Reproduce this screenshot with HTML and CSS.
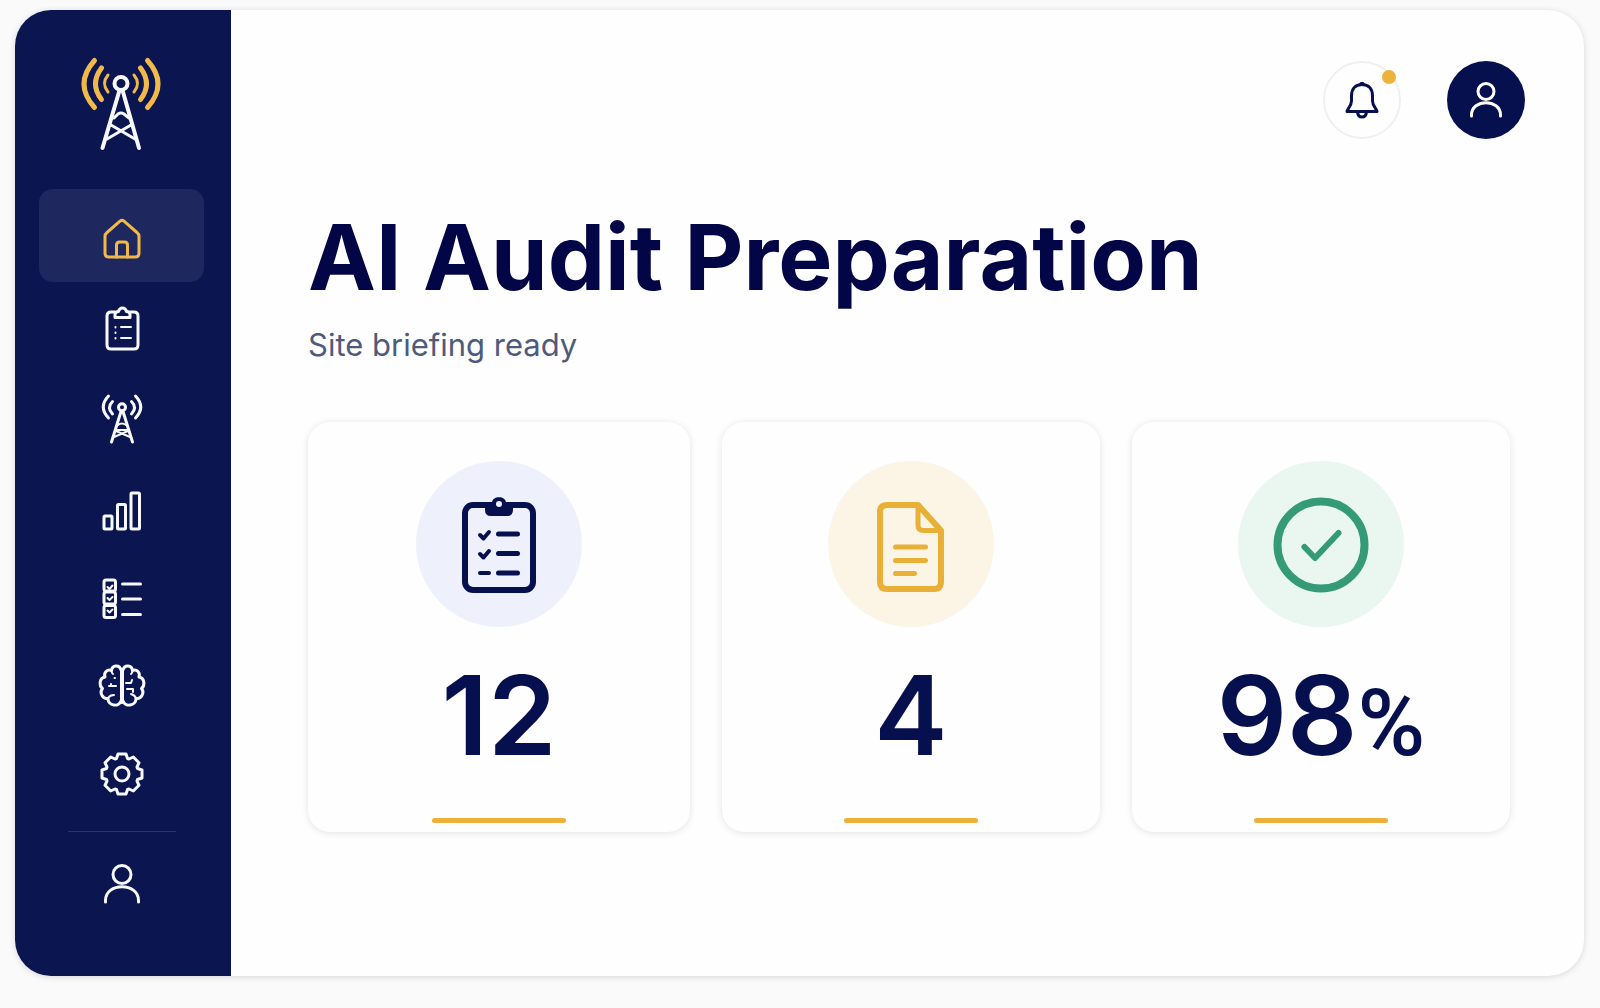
FILE: index.html
```html
<!DOCTYPE html>
<html lang="en">
<head>
    <meta charset="UTF-8">
    <meta name="viewport" content="width=device-width, initial-scale=1.0">
    <title>AI Audit Preparation</title>
    <link rel="stylesheet" href="styles.css">
</head>
<body>
    <div class="app">
        <aside class="sidebar">
            <a href="#" class="logo" aria-label="Home page">
                <svg width="84" height="96" viewBox="0 0 84 96">
                    <g class="waves">
                        <path stroke-width="5" d="M14.500 4.500Q-6.500 28 14.500 51.500M67.500 4.500Q88.500 28 67.500 51.500"/>
                        <path stroke-width="5" d="M21.500 12Q9.500 28 21.500 43.500M60.500 12Q72.500 28 60.500 43.500"/>
                        <path stroke-width="3" d="M28 19Q21 27.500 28 36M54 19Q61 27.500 54 36"/>
                    </g>
                    <circle cx="41" cy="27.500" r="6.500" stroke-width="4"/>
                    <path stroke-width="4" d="M39 36L22.500 92M43 36L59 92"/>
                    <path stroke-width="3" d="M34 62L38 58Q41 56 44 58L49 62M31 69L55 83M51 69L27 83"/>
                </svg>
            </a>

            <nav class="nav">
                <a href="#" class="nav-item active" aria-label="Home">
                    <svg width="44" height="44" viewBox="0 -3 44 44">
                        <path d="M5 19.500Q5 17 7 15.500L20 4.200Q22 2.500 24 4.200L37 15.500Q39 17 39 19.500V36Q39 40 35 40H9Q5 40 5 36Z"/>
                        <path d="M16.500 40V28Q16.500 25 19.500 25H24.500Q27.500 25 27.500 28V40"/>
                    </svg>
                </a>
                <a href="#" class="nav-item" aria-label="Checklist">
                    <svg width="44" height="44" viewBox="0 1 44 44">
                        <path d="M15 5H11Q7 5 7 9V38Q7 42 11 42H34Q38 42 38 38V9Q38 5 34 5H30"/>
                        <path d="M15 10.500V7.500Q15 4.500 18.500 4.500Q19.500 1 22.500 1Q25.500 1 26.500 4.500Q30 4.500 30 7.500V10.500Z"/>
                        <path stroke-width="2" d="M15.500 20V20.500M15.500 25.500V26M15.500 31V31.500M21 20H31M21 31H31"/>
                    </svg>
                </a>
                <a href="#" class="nav-item" aria-label="Towers">
                    <svg width="44" height="50" viewBox="0 0 44 50">
                        <path d="M8.500 2Q-2 13 8.500 24M12.500 7.500Q6.500 13.500 12.500 20M35.500 2Q46 13 35.500 24M31.500 7.500Q37.500 13.500 31.500 20"/>
                        <circle cx="22" cy="13.300" r="3.500"/>
                        <path d="M21 17.500L11.500 48M23 17.500L32.500 48"/>
                        <path stroke-width="2" d="M18 31Q22 28 26 31M17 36H27M16 37L30 43M28 37L14 43"/>
                    </svg>
                </a>
                <a href="#" class="nav-item" aria-label="Statistics">
                    <svg width="44" height="44" viewBox="0 -3 44 44">
                        <rect x="4" y="27" width="8" height="13" rx="1"/>
                        <rect x="17.500" y="15.500" width="8" height="24.500" rx="1"/>
                        <rect x="31" y="4" width="8.500" height="36" rx="1"/>
                    </svg>
                </a>
                <a href="#" class="nav-item" aria-label="Tasks">
                    <svg width="44" height="44" viewBox="0 -2 44 44">
                        <rect x="4" y="3" width="11.500" height="11" rx="2"/>
                        <rect x="4" y="15" width="11.500" height="12" rx="2"/>
                        <rect x="4" y="28.500" width="11.500" height="12" rx="2"/>
                        <path d="M22.500 7H40.500M22.500 22H40.500M22.500 37.500H40.500"/>
                        <path stroke-width="2" d="M7.500 10L9.500 12L12.500 8.500M7.500 21L9.500 23L12.500 20M7.500 33.500L9.500 35.500L12.500 32.500"/>
                    </svg>
                </a>
                <a href="#" class="nav-item" aria-label="Insights">
                    <svg width="46" height="44" viewBox="0 0 46 44">
                        <path d="M22 6C20.500 0 13 1 12.500 6.500C8 5 4.500 8.500 6 13C0 14 0 22 3.500 24.500C0 29 4 35.500 9 34.500C9 42 20 43.500 22 37"/>
                        <path d="M24 6C25.500 0 33 1 33.500 6.500C38 5 41.500 8.500 40 13C46 14 46 22 42.500 24.500C46 29 42 35.500 37 34.500C37 42 26 43.500 24 37"/>
                        <path stroke-width="4" d="M23 6V38"/>
                        <path stroke-width="2" d="M10 22H17M12 20V22M15.500 14H16M9 34Q11 31 15 31M27 19H32L33 16M28 25H34V28M12.500 6.500Q12.500 9 14 10M33.500 6.500Q33.500 9 32 10M37 34.500Q36 31 32 30"/>
                    </svg>
                </a>
                <a href="#" class="nav-item" aria-label="Settings">
                    <svg width="44" height="44" viewBox="-22 -21 44 44">
                        <path d="M-4 -20H4L5.500 -15.500L7 -15L11.300 -17L17 -11.300L15 -7L15.500 -5.500L20 -4V4L15.500 5.500L15 7L17 11.300L11.300 17L7 15L5.500 15.500L4 20H-4L-5.500 15.500L-7 15L-11.300 17L-17 11.300L-15 7L-15.500 5.500L-20 4V-4L-15.500 -5.500L-15 -7L-17 -11.300L-11.300 -17L-7 -15L-5.500 -15.500Z"/>
                        <circle r="7"/>
                    </svg>
                </a>
            </nav>

            <hr class="divider">

            <a href="#" class="nav-item" aria-label="Account">
                <svg width="44" height="44" viewBox="0 1 44 44">
                    <circle cx="22" cy="12.500" r="9"/>
                    <path d="M5.500 40V38.500C5.500 20 38.500 20 38.500 38.500V40"/>
                </svg>
            </a>
        </aside>

        <main class="content">
            <header class="topbar">
                <button class="round-button bell" aria-label="Notifications">
                    <svg width="34" height="38" viewBox="0 0 34 38">
                        <path d="M17 3.500C10 3.500 6.500 8 6.500 15V20C6.500 25 2 28 2 30.500H32C32 28 27.500 25 27.500 20V15C27.500 8 24 3.500 17 3.500Z"/>
                        <path d="M16 2.500H18M12.500 31Q13 36 17 36Q21 36 21.500 31"/>
                    </svg>
                    <span class="badge"></span>
                </button>
                <button class="round-button avatar" aria-label="Profile">
                    <svg width="36" height="38" viewBox="0 0 36 38">
                        <circle cx="18" cy="10.500" r="8"/>
                        <path d="M3.500 35V34C3.500 17.500 32.500 17.500 32.500 34V35"/>
                    </svg>
                </button>
            </header>

            <h1>AI Audit Preparation</h1>
            <p class="subtitle">Site briefing ready</p>

            <section class="cards">
                <article class="card">
                    <div class="card-icon blue">
                        <svg width="74" height="100" viewBox="0 0 74 100">
                            <rect x="3" y="11" width="68" height="85" rx="8" stroke-width="6"/>
                            <path class="solid" d="M23 10H30C29 1 45 1 44 10H51V16Q51 22 45 22H29Q23 22 23 16Z"/>
                            <circle class="hole" cx="37" cy="10" r="3"/>
                            <path stroke-width="4" d="M18 41L21.500 44.500L27 38M18 60L21.500 63.500L27 57M18 79H27"/>
                            <path stroke-width="5" d="M36.500 40H55.500M36.500 59.500H55.500M36.500 79H55.500"/>
                        </svg>
                    </div>
                    <p class="value">12</p>
                    <span class="accent"></span>
                </article>
                <article class="card">
                    <div class="card-icon yellow">
                        <svg width="68" height="100" viewBox="0 0 68 100">
                            <path stroke-width="6" d="M41 11H10Q3 11 3 18V88Q3 95 10 95H57Q64 95 64 88V36.500Z"/>
                            <path stroke-width="5" d="M41 11V31Q41 36.500 46.500 36.500H64"/>
                            <path stroke-width="5" d="M18.500 53H48.500M18.500 66.500H48.500M18.500 79.500H37.500"/>
                        </svg>
                    </div>
                    <p class="value">4</p>
                    <span class="accent"></span>
                </article>
                <article class="card">
                    <div class="card-icon green">
                        <svg width="96" height="100" viewBox="0 0 96 100">
                            <circle cx="48" cy="51" r="43.500" stroke-width="8"/>
                            <path stroke-width="6" d="M31.500 53L42 64L65.500 39"/>
                        </svg>
                    </div>
                    <p class="value">98<span class="percent">%</span></p>
                    <span class="accent"></span>
                </article>
            </section>
        </main>
    </div>
</body>
</html>
```

FILE: styles.css
```css
* {
    box-sizing: border-box;
}

body {
    margin: 0;
    padding: 10px 16px 32px 15px;
    background-color: #fafafa;
    font-family: Inter, "Liberation Sans", sans-serif;
    color: #07104f;
}

.app {
    display: flex;
    min-height: calc(100vh - 42px);
    border-radius: 36px;
    background-color: #fefefe;
    box-shadow: 0 1px 6px rgba(20, 40, 60, 0.16);
    overflow: hidden;
}

svg {
    display: block;
    fill: none;
    stroke: currentColor;
    stroke-linecap: round;
    stroke-linejoin: round;
    overflow: visible;
}

/* Sidebar */
.sidebar {
    flex: 0 0 216px;
    display: flex;
    flex-direction: column;
    align-items: center;
    padding: 46px 3px 0 0;
    background-color: #0b1650;
    color: #f8f9ff;
}

.logo {
    color: inherit;
}

.waves {
    stroke: #f0b94a;
}

.nav {
    display: flex;
    flex-direction: column;
    align-items: center;
    margin-top: 37px;
}

.nav-item {
    display: flex;
    justify-content: center;
    align-items: center;
    width: 165px;
    height: 89px;
    color: inherit;
    stroke-width: 3px;
}

.nav-item.active {
    height: 93px;
    margin-bottom: 3px;
    border-radius: 14px;
    background-color: #1f285e;
    color: #f0b94a;
}

.divider {
    width: 108px;
    height: 1px;
    margin: 12px 0 8px;
    border: none;
    background-color: #2a3469;
}

/* Main area */
.content {
    flex: 1;
    min-width: 0;
    padding: 51px 74px 60px 77px;
}

.topbar {
    display: flex;
    justify-content: flex-end;
    gap: 46px;
    margin-right: -15px;
}

.round-button {
    position: relative;
    display: flex;
    justify-content: center;
    align-items: center;
    width: 78px;
    height: 78px;
    padding: 0;
    border: none;
    border-radius: 50%;
    cursor: pointer;
    stroke-width: 3px;
}

.bell {
    border: 2px solid #f0f0f2;
    background-color: #fefefe;
    color: #07104f;
}

.avatar {
    background-color: #07104f;
    color: #ffffff;
}

.badge {
    position: absolute;
    top: 7px;
    right: 3px;
    width: 14px;
    height: 14px;
    border-radius: 50%;
    background-color: #edb23c;
}

h1 {
    margin: 62px 0 0;
    font-size: 91px;
    font-weight: 700;
    line-height: 112px;
    color: #020546;
}

.subtitle {
    margin: 12px 0 0;
    font-size: 31px;
    line-height: 40px;
    color: #4f5b7a;
}

.cards {
    display: grid;
    grid-template-columns: 1.01fr 1fr 1fr;
    gap: 32px;
    margin-top: 57px;
}

.card {
    display: flex;
    flex-direction: column;
    align-items: center;
    padding: 39px 20px 9px;
    border-radius: 22px;
    background-color: #fefefe;
    box-shadow: 0 1px 7px rgba(20, 30, 50, 0.12);
}

.card-icon {
    display: flex;
    justify-content: center;
    align-items: center;
    width: 166px;
    height: 166px;
    border-radius: 50%;
}

.card-icon.blue {
    background-color: #eef1fc;
    color: #07104f;
}

.card-icon.yellow {
    background-color: #fcf5e6;
    color: #e8b037;
}

.card-icon.green {
    background-color: #eaf7f1;
    color: #349a78;
}

.solid {
    fill: currentColor;
    stroke: none;
}

.hole {
    fill: #eef1fc;
    stroke: none;
}

.value {
    margin: 22px 0 0;
    font-size: 110px;
    font-weight: 600;
    line-height: 132px;
}

.percent {
    font-family: Roboto, sans-serif;
    font-size: 92px;
    font-weight: 500;
    line-height: 1;
}

.accent {
    width: 134px;
    height: 5px;
    margin-top: 37px;
    border-radius: 3px;
    background-color: #edb03a;
}
```
